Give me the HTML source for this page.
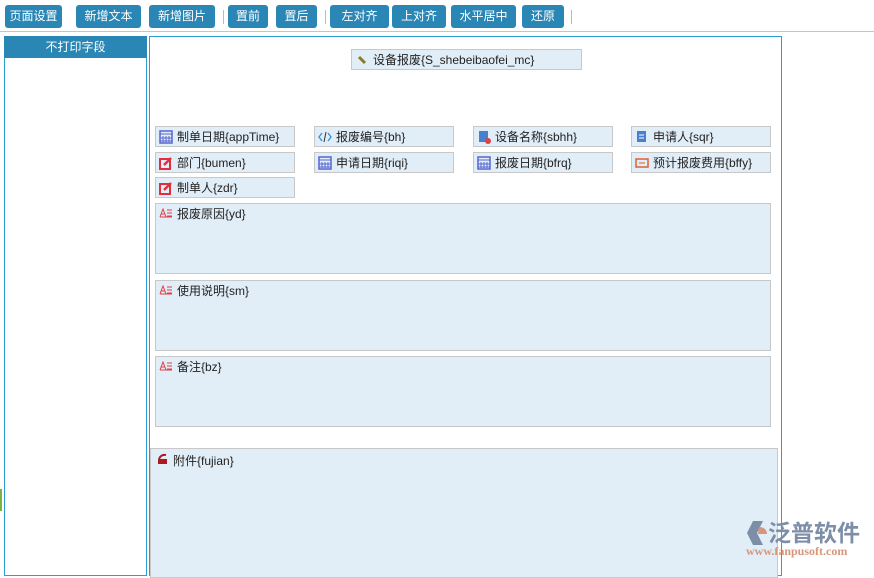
<!DOCTYPE html>
<html><head><meta charset="utf-8"><style>
*{margin:0;padding:0;box-sizing:border-box}
body{width:874px;height:566px;overflow:hidden;background:#fff;font-family:"Liberation Sans","Noto Sans CJK SC",sans-serif;font-size:12px;color:#222;position:relative}
.b{position:absolute;top:5px;height:23px;background:#2a87b5;color:#fff;border-radius:3px;font-size:12px;line-height:23px;text-align:center}
.sep{position:absolute;top:10px;width:1px;height:14px;background:#bbb}
.f{position:absolute;height:21px;background:#e1edf7;border:1px solid #c8c8c8;line-height:20px;padding-left:21px;white-space:nowrap;font-size:12px}
.f svg{position:absolute;left:3px;top:3px}
.ta{position:absolute;background:#e1edf7;border:1px solid #c8c8c8;padding:1px 0 0 21px;line-height:18px}
.ta svg{position:absolute;left:3px;top:4px}
</style></head><body>
<div class="b" style="left:5px;width:57px">页面设置</div>
<div class="b" style="left:76px;width:65px">新增文本</div>
<div class="b" style="left:149px;width:66px">新增图片</div>
<div class="sep" style="left:223px"></div>
<div class="b" style="left:228px;width:40px">置前</div>
<div class="b" style="left:276px;width:41px">置后</div>
<div class="sep" style="left:325px"></div>
<div class="b" style="left:330px;width:59px">左对齐</div>
<div class="b" style="left:392px;width:54px">上对齐</div>
<div class="b" style="left:451px;width:65px">水平居中</div>
<div class="b" style="left:522px;width:42px">还原</div>
<div class="sep" style="left:571px"></div>
<div style="position:absolute;left:0;top:31px;width:874px;height:1px;background:#a9cce0"></div>

<div style="position:absolute;left:4px;top:36px;width:143px;height:540px;border:1px solid #2a9fd6;border-top:none"></div>
<div style="position:absolute;left:4px;top:36px;width:143px;height:22px;background:#2a87b5;color:#fff;text-align:center;line-height:22px;font-size:12px">不打印字段</div>
<div style="position:absolute;left:0;top:489px;width:2px;height:22px;background:#7cb342"></div>

<div style="position:absolute;left:149px;top:36px;width:633px;height:540px;border:1px solid #2a9fd6"></div>

<div class="f" style="left:351px;top:49px;width:231px"><svg width="14" height="14"><path d="M4 4l6 6" stroke="#8a7a2a" stroke-width="3"/></svg>设备报废{S_shebeibaofei_mc}</div>

<div class="f" style="left:155px;top:126px;width:140px"><svg width="14" height="14"><rect x="1" y="1" width="12" height="12" fill="none" stroke="#5865d0" stroke-width="1.5"/><path d="M1 4h12M4 6v6M7 6v6M10 6v6M1 8h12M1 11h12" stroke="#5865d0"/></svg>制单日期{appTime}</div>
<div class="f" style="left:314px;top:126px;width:140px"><svg width="14" height="14"><path d="M4 3L1 7l3 4M10 3l3 4-3 4" stroke="#3a8fd0" fill="none" stroke-width="1.3"/><path d="M8 2L6 12" stroke="#333"/></svg>报废编号{bh}</div>
<div class="f" style="left:473px;top:126px;width:140px"><svg width="14" height="14"><rect x="2" y="1" width="9" height="11" fill="#4a7fd0"/><circle cx="11" cy="11" r="3" fill="#e04040"/></svg>设备名称{sbhh}</div>
<div class="f" style="left:631px;top:126px;width:140px"><svg width="14" height="14"><rect x="2" y="1" width="9" height="11" fill="#4a7fd0"/><path d="M4 5h5M4 8h5" stroke="#fff"/></svg>申请人{sqr}</div>

<div class="f" style="left:155px;top:152px;width:140px"><svg width="14" height="14"><rect x="1" y="3" width="10" height="10" fill="none" stroke="#e03040" stroke-width="2"/><path d="M5 9L12 2" stroke="#e03040" stroke-width="2.5"/></svg>部门{bumen}</div>
<div class="f" style="left:314px;top:152px;width:140px"><svg width="14" height="14"><rect x="1" y="1" width="12" height="12" fill="none" stroke="#5865d0" stroke-width="1.5"/><path d="M1 4h12M4 6v6M7 6v6M10 6v6M1 8h12M1 11h12" stroke="#5865d0"/></svg>申请日期{riqi}</div>
<div class="f" style="left:473px;top:152px;width:140px"><svg width="14" height="14"><rect x="1" y="1" width="12" height="12" fill="none" stroke="#5865d0" stroke-width="1.5"/><path d="M1 4h12M4 6v6M7 6v6M10 6v6M1 8h12M1 11h12" stroke="#5865d0"/></svg>报废日期{bfrq}</div>
<div class="f" style="left:631px;top:152px;width:140px"><svg width="14" height="14"><rect x="1" y="3" width="12" height="8" fill="none" stroke="#e06030" stroke-width="1.5"/><path d="M4 7h6" stroke="#e06030"/></svg>预计报废费用{bffy}</div>

<div class="f" style="left:155px;top:177px;width:140px"><svg width="14" height="14"><rect x="1" y="3" width="10" height="10" fill="none" stroke="#e03040" stroke-width="2"/><path d="M5 9L12 2" stroke="#e03040" stroke-width="2.5"/></svg>制单人{zdr}</div>

<div class="ta" style="left:155px;top:203px;width:616px;height:71px"><svg width="14" height="10"><path d="M1 9L4 1 7 9M2 6h4M8 2h5M8 5h5M8 8h5M1 9h12" stroke="#e04040" fill="none"/></svg>报废原因{yd}</div>
<div class="ta" style="left:155px;top:280px;width:616px;height:71px"><svg width="14" height="10"><path d="M1 9L4 1 7 9M2 6h4M8 2h5M8 5h5M8 8h5M1 9h12" stroke="#e04040" fill="none"/></svg>使用说明{sm}</div>
<div class="ta" style="left:155px;top:356px;width:616px;height:71px"><svg width="14" height="10"><path d="M1 9L4 1 7 9M2 6h4M8 2h5M8 5h5M8 8h5M1 9h12" stroke="#e04040" fill="none"/></svg>备注{bz}</div>
<div class="ta" style="left:150px;top:448px;width:628px;height:130px;padding-left:22px;padding-top:3px"><svg width="14" height="12" style="left:5px;top:4px"><path d="M2 6h9v5H2z" fill="#b01820"/><path d="M3 6Q5 1 10 2" stroke="#b01820" stroke-width="2" fill="none"/></svg>附件{fujian}</div>

<div style="position:absolute;left:745px;top:519px;width:24px;height:28px"><svg width="26" height="28"><path d="M8 2h10l-6 12 6 12H8L2 14z" fill="#7d8fa8"/><path d="M14 8c6 0 8 4 8 7h-9z" fill="#d8957a"/></svg></div>
<div style="position:absolute;left:768px;top:517px;font-size:23px;font-weight:bold;color:#7d8fa8;font-family:'Noto Sans CJK SC',sans-serif;line-height:28px">泛普软件</div>
<div style="position:absolute;left:746px;top:544px;font-size:12px;font-weight:bold;color:#d8957a;font-family:'Liberation Serif',serif">www.fanpusoft.com</div>
</body></html>
